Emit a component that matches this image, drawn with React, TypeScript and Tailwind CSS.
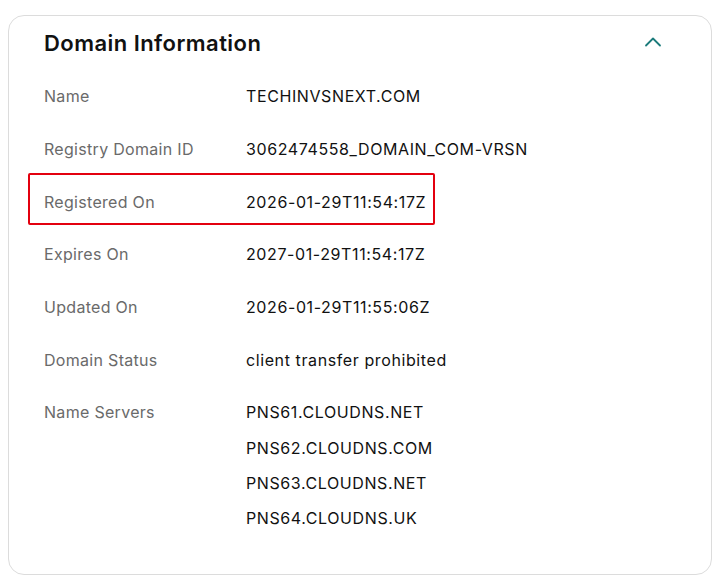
import React from "react";

interface InfoRow {
  label: string;
  values: string[];
  highlight?: boolean;
}

const rows: InfoRow[] = [
  { label: "Name", values: ["TECHINVSNEXT.COM"] },
  { label: "Registry Domain ID", values: ["3062474558_DOMAIN_COM-VRSN"] },
  { label: "Registered On", values: ["2026-01-29T11:54:17Z"], highlight: true },
  { label: "Expires On", values: ["2027-01-29T11:54:17Z"] },
  { label: "Updated On", values: ["2026-01-29T11:55:06Z"] },
  { label: "Domain Status", values: ["client transfer prohibited"] },
];

const nameServers = [
  "PNS61.CLOUDNS.NET",
  "PNS62.CLOUDNS.COM",
  "PNS63.CLOUDNS.NET",
  "PNS64.CLOUDNS.UK",
];

const ChevronUp: React.FC = () => (
  <svg width="18" height="18" viewBox="0 0 18 18" fill="none">
    <path d="M2 12.5L9 5.5L16 12.5" stroke="#1b7b7b" strokeWidth="1.8" strokeLinecap="round" strokeLinejoin="round" />
  </svg>
);

const App: React.FC = () => {
  return (
    <div className="w-[716px] h-[580px] bg-white pt-[15px] pl-[8px] font-['Inter',sans-serif]">
      <div className="w-[704px] h-[560px] rounded-[16px] border border-[#dcdcdc] px-[35px]">
        <div className="flex items-center justify-between h-[54px]">
          <h2 className="text-[22px] font-semibold text-[#111] tracking-[0.45px]">Domain Information</h2>
          <div className="mr-[14px] mt-[-2px]">
            <ChevronUp />
          </div>
        </div>

        {rows.map((row) => (
          <div key={row.label} className="relative flex items-center h-[52.7px] text-[16px]">
            {row.highlight && (
              <div className="absolute left-[-16px] top-[-2.5px] w-[407px] h-[52px] border-[2.5px] border-[#e3000f] rounded-[2px]" />
            )}
            <div className="w-[202px] text-[#6a6a6a] tracking-[0.3px]">{row.label}</div>
            <div className="text-[#111] tracking-[0.6px]">{row.values[0]}</div>
          </div>
        ))}

        <div className="flex pt-[8.5px] text-[16px]">
          <div className="w-[202px] h-[35.3px] flex items-center text-[#6a6a6a] tracking-[0.3px]">Name Servers</div>
          <div className="flex flex-col">
            {nameServers.map((ns) => (
              <div key={ns} className="h-[35.3px] flex items-center text-[#111] tracking-[0.6px]">
                {ns}
              </div>
            ))}
          </div>
        </div>
      </div>
    </div>
  );
};

export default App;
